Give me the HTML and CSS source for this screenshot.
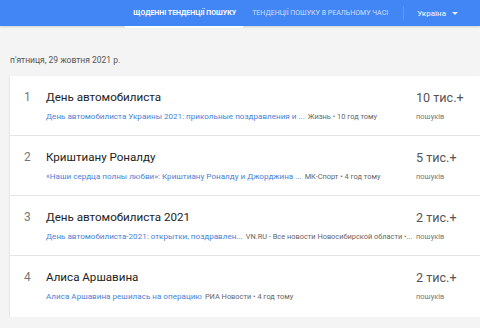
FILE: index.html
```html
<!DOCTYPE html>
<html lang="uk">
<head>
<meta charset="UTF-8" />
<title>Тенденції пошуку</title>
<link rel="stylesheet" href="styles.css">
</head>
<body>

<div class="topbar">
  <div class="tabs">
    <a class="tab active">Щоденні тенденції пошуку</a>
    <a class="tab">Тенденції пошуку в реальному часі</a>
  </div>
  <div class="country">Україна <span class="caret"></span></div>
</div>

<div class="page">
  <div class="date">п'ятниця, 29 жовтня 2021 р.</div>

  <div class="card">
    <div class="row">
      <div class="rank">1</div>
      <div class="info">
        <div class="title">День автомобилиста</div>
        <div class="sub"><span class="link">День автомобилиста Украины 2021: прикольные поздравления и ...</span> <span class="src">Жизнь • 10 год тому</span></div>
      </div>
      <div class="count">
        <div class="num">10 тис.+</div>
        <div class="label">пошуків</div>
      </div>
    </div>

    <div class="row">
      <div class="rank">2</div>
      <div class="info">
        <div class="title">Криштиану Роналду</div>
        <div class="sub"><span class="link">«Наши сердца полны любви»: Криштиану Роналду и Джорджина ...</span> <span class="src">МК-Спорт • 4 год тому</span></div>
      </div>
      <div class="count">
        <div class="num">5 тис.+</div>
        <div class="label">пошуків</div>
      </div>
    </div>

    <div class="row">
      <div class="rank">3</div>
      <div class="info">
        <div class="title">День автомобилиста 2021</div>
        <div class="sub"><span class="link">День автомобилиста-2021: открытки, поздравлен...</span> <span class="src">VN.RU - Все новости Новосибирской области •...</span></div>
      </div>
      <div class="count">
        <div class="num">2 тис.+</div>
        <div class="label">пошуків</div>
      </div>
    </div>

    <div class="row">
      <div class="rank">4</div>
      <div class="info">
        <div class="title">Алиса Аршавина</div>
        <div class="sub"><span class="link">Алиса Аршавина решилась на операцию</span> <span class="src">РИА Новости • 4 год тому</span></div>
      </div>
      <div class="count">
        <div class="num">2 тис.+</div>
        <div class="label">пошуків</div>
      </div>
    </div>
  </div>
</div>

</body>
</html>
```

FILE: styles.css
```css
body {
  margin: 0;
  font-family: Roboto, "Liberation Sans", sans-serif;
  background: #f4f4f4;
  color: #212121;
  overflow: hidden;
}

/* Синя панель зверху */
.topbar {
  height: 26px;
  background: #4285f4;
  display: flex;
  align-items: center;
  justify-content: flex-end;
  box-shadow: 0 1px 2px rgba(0,0,0,0.15);
}

.tabs {
  display: flex;
  height: 100%;
}

.tab {
  display: flex;
  align-items: center;
  padding: 0 8px 0 9px;
  font-size: 7px;
  text-transform: uppercase;
  color: rgba(255,255,255,0.75);
  position: relative;
}
.tab.active {
  color: #fff;
  font-weight: bold;
  padding: 0 7px 0 8px;
}
.tab.active::after {
  content: "";
  position: absolute;
  left: 0; right: 0; bottom: -2px;
  height: 2px;
  background: #fff;
}

.country {
  margin-left: 7px;
  padding: 0 22px 0 13px;
  border-left: 1px solid rgba(255,255,255,0.15);
  height: 14px;
  display: flex;
  align-items: center;
  font-size: 8px;
  font-weight: 500;
  color: rgba(255,255,255,0.85);
}
.caret {
  margin-left: 6px;
  border-left: 3px solid transparent;
  border-right: 3px solid transparent;
  border-top: 3px solid rgba(255,255,255,0.85);
}

.page {
  padding: 29px 0 0 10px;
}

.date {
  font-size: 8.5px;
  color: #555;
  margin-bottom: 11px;
}

.card {
  background: #fff;
  box-shadow: 0 1px 2px rgba(0,0,0,0.15);
}

.row {
  display: flex;
  height: 59px;
  border-bottom: 1px solid #e4e4e4;
}
.row:last-child {
  border-bottom: none;
  height: 61px;
}

.rank {
  flex: none;
  width: 36px;
  padding: 14px 0 0 14px;
  box-sizing: border-box;
  font-size: 12px;
  color: #777;
}

.info {
  flex: 1;
  min-width: 0;
  padding-top: 14px;
  white-space: nowrap;
}

.title {
  font-size: 11.6px;
  line-height: 15px;
  color: #222;
}

.sub {
  margin-top: 6px;
  font-size: 8px;
  line-height: 10px;
}
.link {
  font-size: 8.1px;
  color: #4a7fd6;
}
.src {
  font-size: 7.4px;
  color: #666;
  margin-left: 1px;
}

.count {
  flex: none;
  width: 64px;
  padding-top: 14px;
}
.num {
  font-size: 12.6px;
  line-height: 16px;
  color: #555;
}
.label {
  margin-top: 6px;
  font-size: 7.5px;
  color: #777;
}
```
